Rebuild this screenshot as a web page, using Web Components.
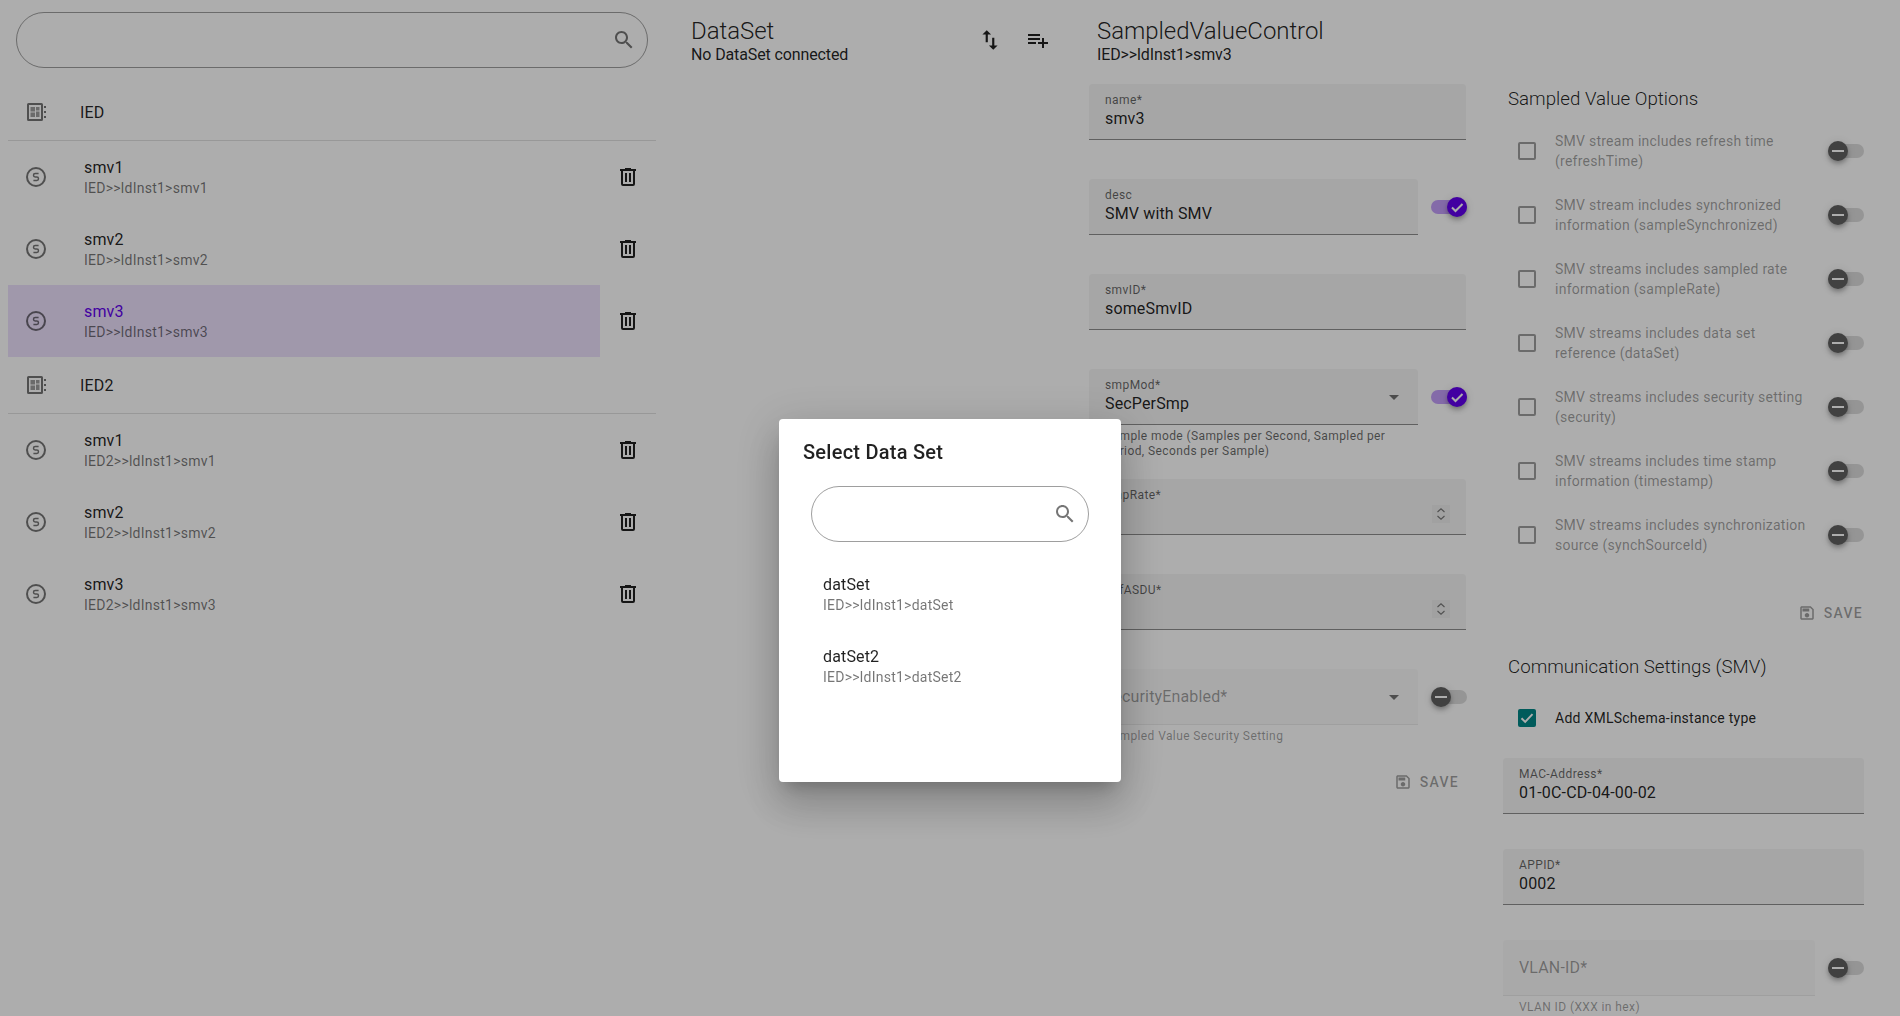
<!DOCTYPE html>
<html lang="en"><head><meta charset="utf-8"><title>SampledValueControl</title>
<style>
html,body{margin:0;height:100%;overflow:hidden}
body{background:#fff;font-family:Roboto,"Liberation Sans",sans-serif;color:rgba(0,0,0,.87)}
</style></head><body>
<x-app></x-app>
<script>
const P={
search:'M15.5 14h-.79l-.28-.27C15.41 12.59 16 11.11 16 9.5 16 5.91 13.09 3 9.5 3S3 5.91 3 9.5 5.91 16 9.5 16c1.61 0 3.09-.59 4.23-1.57l.27.28v.79l5 4.99L20.49 19l-4.99-5zm-6 0C7.01 14 5 11.99 5 9.5S7.01 5 9.5 5 14 7.01 14 9.5 11.99 14 9.5 14z',
trash:'M9 3v1H4v2h1v13a2 2 0 0 0 2 2h10a2 2 0 0 0 2-2V6h1V4h-5V3H9m-2 3h10v13H7V6m2 2v9h2V8H9m4 0v9h2V8h-2z',
swap:'M16 17.01V10h-2v7.01h-3L15 21l4-3.99h-3zM9 3L5 6.99h3V14h2V6.99h3L9 3z',
add:'M14 10H2v2h12v-2zm0-4H2v2h12V6zm4 8v-4h-2v4h-4v2h4v4h2v-4h4v-2h-4zM2 16h8v-2H2v2z',
save:'M17 3H5c-1.11 0-2 .9-2 2v14c0 1.1.89 2 2 2h14c1.1 0 2-.9 2-2V7l-4-4zm2 16H5V5h11.17L19 7.83V19zm-7-7c-1.66 0-3 1.34-3 3s1.34 3 3 3 3-1.34 3-3-1.34-3-3-3zM6 6h9v4H6z'};
const svg=(d,s=24,c='currentColor')=>`<svg width="${s}" height="${s}" viewBox="0 0 24 24" fill="${c}" style="display:block;flex:none"><path d="${d}"/></svg>`;
const smvIcon=`<svg width="24" height="24" viewBox="0 0 24 24" fill="none" stroke="currentColor" stroke-width="2" style="display:block;flex:none"><circle cx="12" cy="12" r="9"/><path stroke-width="1.500" d="M14.600 8.600h-3.400a1.700 1.700 0 0 0 0 3.400h1.600a1.700 1.700 0 0 1 0 3.400H9.400"/></svg>`;
const iedIcon=`<svg width="24" height="24" viewBox="0 0 24 24" fill="currentColor" style="display:block;flex:none"><path fill-rule="evenodd" d="M4.500 3h13A1.500 1.500 0 0 1 19 4.500v15a1.500 1.500 0 0 1-1.500 1.500h-13A1.500 1.500 0 0 1 3 19.500v-15A1.500 1.500 0 0 1 4.500 3zM5 5v14h12V5z"/><path opacity=".7" d="M6.500 7h4.500v4.500H6.500zM6.500 12.500h4.500v4.500H6.500zM12 7h3.500v3.500H12zM12 11.500h3.500V17H12z"/><path d="M20 6h2v2h-2zM20 11h2v2h-2zM20 16h2v2h-2z"/></svg>`;
function def(name,css,render){
  customElements.define(name,class extends HTMLElement{
    constructor(){super();this.attachShadow({mode:'open'})}
    connectedCallback(){const a=n=>this.getAttribute(n);this.shadowRoot.innerHTML=`<style>${css}</style>`+render(a,n=>this.hasAttribute(n))}
  });
}
def('x-search',`:host{display:flex;align-items:center;height:56px;box-sizing:border-box;border:1px solid rgba(0,0,0,.38);border-radius:28px;padding:0 11px 0 24px;color:rgba(0,0,0,.54)}
input{flex:1;min-width:0;border:0;background:none;outline:0;font:16px Roboto}`,()=>`<input type="text" aria-label="filter">${svg(P.search)}`);
def('x-item',`:host{display:flex;height:72px;box-sizing:border-box;padding:17px 16px 0;--c:rgba(0,0,0,.87)}
:host([selected]){background:rgba(98,0,238,.12);--c:#6200ee}
.ic{margin:7px 36px 0 0;color:rgba(0,0,0,.54)}
.p{font-size:16px;line-height:20px;letter-spacing:.15px;color:var(--c)}
.s{font-size:14px;line-height:20px;letter-spacing:.25px;color:rgba(0,0,0,.54)}`,
a=>`${a('plain')===null?`<div class="ic">${smvIcon}</div>`:''}<div><div class="p">${a('primary')}</div><div class="s">${a('secondary')}</div></div>`);
def('x-smv-row',`:host{display:flex;height:72px}
.i{flex:1;min-width:0}.b{display:flex;align-items:center;justify-content:center;width:48px;margin:0 4px;color:rgba(0,0,0,.87)}
::slotted(x-item){width:100%}`,()=>`<div class="i"><slot></slot></div><div class="b">${svg(P.trash)}</div>`);
def('x-group',`:host{display:flex;align-items:center;height:56px;padding-left:16px;box-sizing:border-box;font-size:16px;letter-spacing:.15px}
.ic{margin:0 32px 0 0;color:rgba(0,0,0,.54)}`,a=>`<div class="ic">${iedIcon}</div><span>${a('name')}</span>`);
def('x-divider',`:host{display:block;height:1px;background:rgba(0,0,0,.12)}`,()=>'');
def('x-switch',`:host{display:block;position:relative;width:36px;height:20px;flex:none}
.t{position:absolute;left:0;top:3px;width:36px;height:14px;border-radius:7px;background:#dcdcdc}
.h{position:absolute;left:0;top:0;width:20px;height:20px;border-radius:50%;background:#616161;box-shadow:0 2px 4px -1px rgba(0,0,0,.2),0 4px 5px rgba(0,0,0,.14),0 1px 10px rgba(0,0,0,.12);color:#fff}
:host([on]) .t{background:rgba(98,0,238,.38)}
:host([on]) .h{left:16px;background:#6200ee}
svg{display:block}`,
(a,h)=>`<div class="t"></div><div class="h">${h('on')?'<svg width="20" height="20" viewBox="0 0 20 20" fill="none" stroke="#fff" stroke-width="2"><path d="M5 10.500l3.500 3.500L15.500 7"/></svg>':'<svg width="20" height="20" viewBox="0 0 20 20"><rect x="4" y="9" width="12" height="2" fill="#fff"/></svg>'}</div>`);
def('x-field',`:host{display:flex;align-items:flex-start;gap:13px;margin-bottom:var(--gap,20px)}
.w{flex:1;min-width:0}
.f{height:56px;box-sizing:border-box;padding:0 16px;background:#f5f5f5;border-radius:4px 4px 0 0;border-bottom:1px solid rgba(0,0,0,.42);position:relative}
.l{position:absolute;left:16px;top:9px;font-size:12px;line-height:14px;letter-spacing:.4px;color:rgba(0,0,0,.6)}
.v{position:absolute;left:16px;top:25px;font-size:16px;line-height:20px;letter-spacing:.15px;color:rgba(0,0,0,.87)}
.dis .f{background:#fafafa;border-bottom-color:rgba(0,0,0,.06)}
.dis .l{top:18px;font-size:16px;line-height:20px;letter-spacing:.15px;color:rgba(0,0,0,.38)}
.tri{position:absolute;right:19px;top:26px;width:0;height:0;border:5px solid transparent;border-top-color:rgba(0,0,0,.54);border-bottom:0}
.num{position:absolute;right:16px;top:26px;width:18px;height:18px;background:#ededed;color:rgba(0,0,0,.5)}
.h{min-height:15px;padding:4px 16px 0;font-size:12px;line-height:15px;letter-spacing:.4px;color:rgba(0,0,0,.6)}
.dis .h{color:rgba(0,0,0,.38)}
x-switch{margin-top:18px}`,
(a,h)=>{const sw=a('sw');const dis=sw==='off';
return `<div class="w ${dis?'dis':''}"><div class="f"><span class="l">${a('label')}</span>${a('value')?`<span class="v">${a('value')}</span>`:''}${h('select')?'<i class="tri"></i>':''}${h('number')?'<div class="num"><svg width="18" height="18" viewBox="0 0 18 18" fill="none" stroke="currentColor" stroke-width="1.100" style="display:block"><path d="M5.500 7L9 3.800 12.500 7M5.500 11L9 14.200 12.500 11"/></svg></div>':''}</div><div class="h">${a('helper')||''}</div></div>${sw?`<x-switch ${sw==='on'?'on':''}></x-switch>`:''}`});
def('x-save',`:host{display:flex;justify-content:flex-end;align-items:center;height:36px;gap:8px;padding-right:var(--save-pr,8px);color:rgba(0,0,0,.38);font-size:14px;font-weight:500;letter-spacing:1.250px}`,()=>`${svg(P.save,18)}<span>SAVE</span>`);
def('x-option',`:host{display:flex;align-items:center;height:var(--h,64px);font-size:14px;line-height:20px;letter-spacing:.25px;color:rgba(0,0,0,.38)}
:host([checked]){color:rgba(0,0,0,.87)}
.c{width:48px;flex:none;display:flex;justify-content:center}
.b{width:18px;height:18px;box-sizing:border-box;border:2px solid rgba(0,0,0,.38);border-radius:2px}
:host([checked]) .b{background:#018786;border:0}
.t{flex:1;min-width:0;padding:0 18px 0 4px}
svg{display:block}`,
(a,h)=>`<div class="c"><div class="b">${h('checked')?'<svg width="18" height="18" viewBox="0 0 18 18" fill="none" stroke="#fff" stroke-width="2"><path d="M3.500 9.200l3.700 3.700 7.300-7.800"/></svg>':''}</div></div><div class="t"><slot></slot></div>${h('checked')?'':'<x-switch></x-switch>'}`);
def('x-heading',`:host{display:block;padding-left:var(--pl,8px)}
.t{font-size:24px;line-height:28px;font-weight:300;letter-spacing:-.05px}
.s{font-size:16px;line-height:20px;letter-spacing:-.12px}`,a=>`<div class="t">${a('title')}</div><div class="s">${a('sub')}</div>`);
def('x-title',`:host{display:block;padding-left:5px;font-size:18.72px;line-height:22px;font-weight:300}`,()=>`<slot></slot>`);
def('x-dialog',`:host{position:fixed;inset:0;background:rgba(0,0,0,.32);display:flex;justify-content:center;align-items:flex-start;padding-top:419px;box-sizing:border-box}
.d{width:342px;background:#fff;border-radius:4px;box-sizing:border-box;padding:17px 24px 80px;box-shadow:0 11px 15px -7px rgba(0,0,0,.2),0 24px 38px 3px rgba(0,0,0,.14),0 9px 46px 8px rgba(0,0,0,.12)}
h2{margin:0 0 18px;font-size:20px;line-height:32px;font-weight:500;letter-spacing:.25px;color:rgba(0,0,0,.87)}
x-search{margin:0 8px 16px}
x-item{padding-left:20px}`,
()=>`<div class="d"><h2>Select Data Set</h2><x-search></x-search><x-item plain primary="datSet" secondary="IED&gt;&gt;ldInst1&gt;datSet"></x-item><x-item plain primary="datSet2" secondary="IED&gt;&gt;ldInst1&gt;datSet2"></x-item></div>`);
def('x-app',`:host{display:flex;height:1016px;overflow:hidden}
.c1{width:648px;flex:none;margin:0 16px 0 8px;padding-top:12px}
.c1 x-search{margin:0 8px 16px}
.c2{width:417px;flex:none;box-sizing:border-box;padding:16px 27px 0 19px;display:flex;align-items:flex-start}
.c2 x-heading{flex:1;--pl:0;padding-top:1px}
.ib{width:48px;height:48px;display:flex;align-items:center;justify-content:center;color:rgba(0,0,0,.87)}
.c3{width:378px;flex:none;padding-top:17px}
.c3 x-heading{margin-bottom:19px}
.c3 x-field:not([sw]){margin-right:1px}
.c4{width:361px;flex:none;margin-left:36px;padding-top:88px;--gap:16px;--save-pr:1px}
.c4 x-title{margin-bottom:9px}
.c4 x-save{margin:28px 0 25px}
.c4 x-title.b{margin-bottom:16px}
.c4 x-option.x{--h:48px;margin-bottom:16px}`,
()=>`
<section class="c1">
<x-search></x-search>
<x-group name="IED"></x-group><x-divider></x-divider>
<x-smv-row><x-item primary="smv1" secondary="IED&gt;&gt;ldInst1&gt;smv1"></x-item></x-smv-row>
<x-smv-row><x-item primary="smv2" secondary="IED&gt;&gt;ldInst1&gt;smv2"></x-item></x-smv-row>
<x-smv-row><x-item selected primary="smv3" secondary="IED&gt;&gt;ldInst1&gt;smv3"></x-item></x-smv-row>
<x-group name="IED2"></x-group><x-divider></x-divider>
<x-smv-row><x-item primary="smv1" secondary="IED2&gt;&gt;ldInst1&gt;smv1"></x-item></x-smv-row>
<x-smv-row><x-item primary="smv2" secondary="IED2&gt;&gt;ldInst1&gt;smv2"></x-item></x-smv-row>
<x-smv-row><x-item primary="smv3" secondary="IED2&gt;&gt;ldInst1&gt;smv3"></x-item></x-smv-row>
</section>
<section class="c2">
<x-heading title="DataSet" sub="No DataSet connected"></x-heading>
<div class="ib">${svg(P.swap,26)}</div><div class="ib">${svg(P.add)}</div>
</section>
<section class="c3">
<x-heading title="SampledValueControl" sub="IED&gt;&gt;ldInst1&gt;smv3"></x-heading>
<x-field label="name*" value="smv3"></x-field>
<x-field label="desc" value="SMV with SMV" sw="on"></x-field>
<x-field label="smvID*" value="someSmvID"></x-field>
<x-field label="smpMod*" value="SecPerSmp" select sw="on" helper="Sample mode (Samples per Second, Sampled per Period, Seconds per Sample)"></x-field>
<x-field label="smpRate*" number></x-field>
<x-field label="nofASDU*" number></x-field>
<x-field label="securityEnabled*" select sw="off" helper="Sampled Value Security Setting"></x-field>
<x-save></x-save>
</section>
<section class="c4">
<x-title>Sampled Value Options</x-title>
<x-option>SMV stream includes refresh time (refreshTime)</x-option>
<x-option>SMV stream includes synchronized information (sampleSynchronized)</x-option>
<x-option>SMV streams includes sampled rate information (sampleRate)</x-option>
<x-option>SMV streams includes data set reference (dataSet)</x-option>
<x-option>SMV streams includes security setting (security)</x-option>
<x-option>SMV streams includes time stamp information (timestamp)</x-option>
<x-option>SMV streams includes synchronization source (synchSourceId)</x-option>
<x-save></x-save>
<x-title class="b">Communication Settings (SMV)</x-title>
<x-option class="x" checked>Add XMLSchema-instance type</x-option>
<x-field label="MAC-Address*" value="01-0C-CD-04-00-02"></x-field>
<x-field label="APPID*" value="0002"></x-field>
<x-field label="VLAN-ID*" sw="off" helper="VLAN ID (XXX in hex)"></x-field>
</section>
<x-dialog></x-dialog>`);
</script>
</body></html>
